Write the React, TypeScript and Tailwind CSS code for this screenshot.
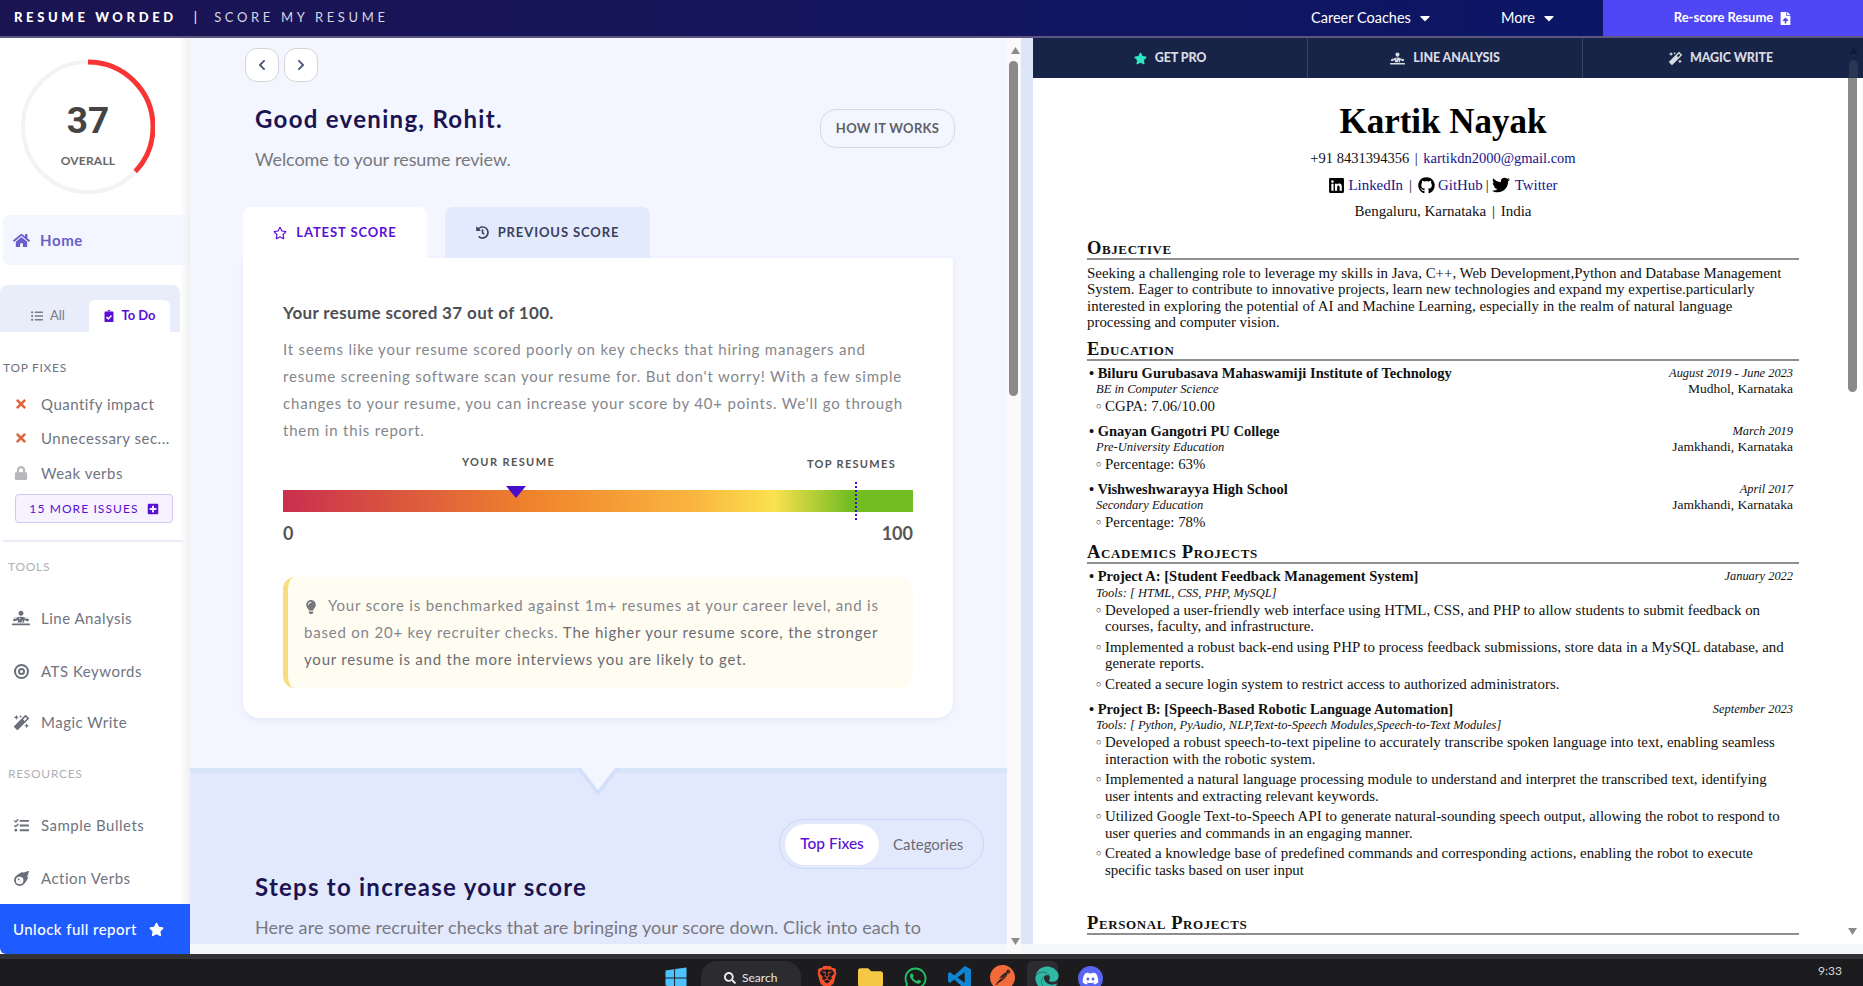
import React from 'react';
import {
  FaHome, FaStar, FaRegStar, FaHistory, FaTimes, FaLock, FaPlusSquare, FaListUl, FaClipboardCheck,
  FaCaretDown, FaFileUpload, FaChevronLeft, FaChevronRight, FaLightbulb, FaLinkedin, FaGithub, FaTwitter,
  FaMagic, FaTasks, FaMeteor, FaDiagnoses, FaWindows, FaFolder, FaWhatsapp, FaEdge, FaDiscord, FaSearch,
} from 'react-icons/fa';
import { SiBrave, SiPostman } from 'react-icons/si';

const Ring = () => (
  <div className="relative ml-[20px] mt-[21px] h-[135px] w-[135px] shrink-0">
    <svg width="135" height="135" viewBox="0 0 135 135">
      <circle cx="68" cy="68" r="65" fill="none" stroke="#f3f3f4" strokeWidth="4" />
      <circle cx="68" cy="68" r="65" fill="none" stroke="#f93434" strokeWidth="5" strokeDasharray="151 408" transform="rotate(-90 68 68)" />
    </svg>
    <div className="absolute left-0 top-[42px] w-[136px] text-center font-['Roboto'] text-[37px] font-bold leading-[40px] text-[#444]">37</div>
    <div className="absolute left-0 top-[94px] w-[136px] text-center text-[12px] font-bold leading-[16px] tracking-[0.2px] text-[#666]">OVERALL</div>
  </div>
);

const SideRow = ({ icon, label, top }: { icon: React.ReactNode; label: string; top: string }) => (
  <div className={`flex h-[20px] items-center text-[15px] leading-[20px] tracking-[0.5px] text-[#6f7480] ${top}`}>
    <span className="flex w-[41px] justify-center pl-[1px] text-[#6b6f7a]">{icon}</span>
    <span className="whitespace-nowrap">{label}</span>
  </div>
);

const Sidebar = () => (
  <aside className="relative flex h-full w-[190px] shrink-0 flex-col bg-white">
    <div className="absolute right-0 top-0 h-full w-[10px] bg-gradient-to-r from-white to-[#efefef]" />
    <Ring />
    <div className="relative ml-[3px] mt-[21px] flex h-[50px] w-[182px] items-center rounded-l-md bg-[#f3f6ff] text-[#6a5fc9]">
      <span className="flex w-[37px] justify-center"><FaHome size={17} /></span>
      <span className="text-[15px] font-bold tracking-[0.6px]">Home</span>
    </div>
    <div className="relative mt-[20px] flex h-[47px] w-[180px] items-end rounded-t-lg bg-[#e9edfa] pl-[31px]">
      <div className="flex h-[32px] w-[58px] items-center gap-[7px] text-[13px] text-[#777c88]">
        <FaListUl size={12} />
        All
      </div>
      <div className="flex h-[32px] w-[81px] items-center justify-center gap-[6px] rounded-t-md bg-white text-[13px] font-bold text-[#5a0fd6]">
        <FaClipboardCheck size={12} />
        To Do
      </div>
    </div>
    <div className="relative mt-[28px] pl-[3px] text-[12px] leading-[16px] tracking-[0.7px] text-[#6f7480]">TOP FIXES</div>
    <SideRow top="relative mt-[18px]" label="Quantify impact" icon={<FaTimes size={14} className="text-[#e0643a]" />} />
    <SideRow top="relative mt-[14px]" label="Unnecessary sec..." icon={<FaTimes size={14} className="text-[#e0643a]" />} />
    <SideRow top="relative mt-[15px]" label="Weak verbs" icon={<FaLock size={14} className="text-[#b8b8bc]" />} />
    <div className="relative ml-[15px] mt-[11px] flex h-[29px] w-[158px] items-center justify-center gap-[8px] rounded-[4px] border border-[#d3c4f5] bg-[#f6f3ff] text-[12px] tracking-[1.1px] text-[#5a0fd6]">
      15 MORE ISSUES
      <FaPlusSquare size={12} />
    </div>
    <div className="relative ml-[3px] mt-[17px] h-[2px] w-[180px] bg-[#e9edfa]" />
    <div className="relative mt-[17px] pl-[8px] text-[12px] leading-[16px] tracking-[0.7px] text-[#aeb0b6]">TOOLS</div>
    <SideRow top="relative mt-[33px]" label="Line Analysis" icon={<FaDiagnoses size={18} />} />
    <SideRow top="relative mt-[33px]" label="ATS Keywords" icon={<span className="block h-[15px] w-[15px] rounded-full border-2 border-[#6b6f7a] p-[2px]"><span className="block h-full w-full rounded-full border-2 border-[#6b6f7a]" /></span>} />
    <SideRow top="relative mt-[31px]" label="Magic Write" icon={<FaMagic size={15} />} />
    <div className="relative mt-[34px] pl-[8px] text-[12px] leading-[16px] tracking-[0.7px] text-[#aeb0b6]">RESOURCES</div>
    <SideRow top="relative mt-[33px]" label="Sample Bullets" icon={<FaTasks size={15} />} />
    <SideRow top="relative mt-[33px]" label="Action Verbs" icon={<FaMeteor size={15} />} />
    <div className="relative mt-auto flex h-[50px] items-center gap-[12px] rounded-bl-md bg-[#1e5cff] pl-[13px] text-[15px] font-medium tracking-[0.45px] text-white">
      Unlock full report
      <FaStar size={15} />
    </div>
  </aside>
);

const Gauge = () => (
  <div className="relative mt-[1px] h-[100px] text-[#555]">
    <div className="absolute left-[179px] top-[9px] text-[11px] font-bold leading-[16px] tracking-[1.4px]">YOUR RESUME</div>
    <div className="absolute right-[17px] top-[11px] text-[11px] font-bold leading-[16px] tracking-[1.3px]">TOP RESUMES</div>
    <div className="absolute left-0 right-0 top-[45px] h-[22px] bg-[linear-gradient(90deg,#c92f4e_0%,#f0842c_40%,#f9b53f_65%,#fbe14f_78%,#72bd22_90%,#72bd22_100%)]" />
    <svg className="absolute left-[222px] top-[40px]" width="22" height="13" viewBox="0 0 22 13">
      <polygon points="1,1 21,1 11,13" fill="#4a0dc9" />
    </svg>
    <div className="absolute left-[572px] top-[37px] h-[38px] border-l-2 border-dotted border-[#4a0dc9]" />
    <div className="absolute left-0 right-0 top-[76px] flex justify-between text-[18px] font-bold leading-[24px]">
      <span>0</span>
      <span>100</span>
    </div>
  </div>
);

const ScoreCard = () => (
  <div className="rounded-b-2xl bg-white px-10 pb-[30px] pt-[43px] shadow-[0_2px_6px_rgba(60,80,140,0.08)]">
    <h3 className="text-[17px] font-bold leading-[24px] tracking-[0.35px] text-[#4d4f55]">Your resume scored 37 out of 100.</h3>
    <p className="mt-[11px] whitespace-nowrap text-[15px] leading-[27px] tracking-[0.8px] text-[#85868c]">
      It seems like your resume scored poorly on key checks that hiring managers and<br />
      resume screening software scan your resume for. But don't worry! With a few simple<br />
      changes to your resume, you can increase your score by 40+ points. We'll go through<br />
      them in this report.
    </p>
    <Gauge />
    <div className="mt-[32px] h-[111px] whitespace-nowrap rounded-xl border-l-[5px] border-[#f8dc82] bg-[#fffcf2] pb-[14px] pl-[16px] pt-[15px] text-[15px] leading-[27px] tracking-[0.8px] text-[#85868c]">
      <FaLightbulb size={14} className="mr-[10px] inline text-[#77787c]" />
      Your score is benchmarked against 1m+ resumes at your career level, and is<br />
      based on 20+ key recruiter checks. <span className="text-[#6b6c72]">The higher your resume score, the stronger<br />
      your resume is and the more interviews you are likely to get.</span>
    </div>
  </div>
);

const MainColumn = () => (
  <main className="h-[906px] w-[817px] shrink-0 overflow-hidden bg-[#f3f6ff]">
    <div className="pl-[53px] pr-[54px] pt-[10px]">
      <div className="ml-[2px] flex gap-[5px] text-[#4f5a7a]">
        <button className="flex h-[34px] w-[34px] items-center justify-center rounded-xl border border-[#d5d6da] bg-white"><FaChevronLeft size={12} /></button>
        <button className="flex h-[34px] w-[34px] items-center justify-center rounded-xl border border-[#d5d6da] bg-white"><FaChevronRight size={12} /></button>
      </div>
      <div className="mt-[22px] flex items-start justify-between pl-[12px]">
        <div>
          <h1 className="text-[24px] font-bold leading-[30px] tracking-[1.3px] text-[#1b1452]">Good evening, Rohit.</h1>
          <p className="mt-[12px] text-[18px] leading-[26px] tracking-[-0.1px] text-[#77787e]">Welcome to your resume review.</p>
        </div>
        <button className="-mr-[2px] mt-[5px] h-[39px] w-[135px] rounded-2xl border border-[#d6d8e6] bg-[#f3f6ff] pt-[1px] text-[13px] font-bold tracking-[0.3px] text-[#5c5e68]">HOW IT WORKS</button>
      </div>
      <div className="mt-[35px] flex h-[51px] gap-[18px]">
        <div className="flex w-[184px] items-center justify-center gap-[9px] rounded-t-lg bg-white text-[13px] font-bold tracking-[0.9px] text-[#5a0fd6]">
          <FaRegStar size={14} />
          LATEST SCORE
        </div>
        <div className="flex w-[205px] items-center justify-center gap-[9px] rounded-t-lg bg-[#e4eafd] text-[13px] font-bold tracking-[0.9px] text-[#3a3f5c]">
          <FaHistory size={13} />
          PREVIOUS SCORE
        </div>
      </div>
      <ScoreCard />
    </div>
    <section className="relative mt-[50px] h-[200px] border-t-[5px] border-[#d8e4fa] bg-[#e3e9fd] pt-[46px]">
      <svg className="absolute left-[386px] top-[-5px]" width="44" height="28" viewBox="0 0 44 28">
        <polygon points="0,0 44,0 22,28" fill="#d3e0fa" />
        <polygon points="5,0 39,0 22,22" fill="#f3f6ff" />
      </svg>
      <div className="flex justify-end pr-[23px]">
        <div className="flex h-[50px] w-[205px] items-center rounded-full border border-[#c9d6fa] pl-[5px]">
          <span className="flex h-[41px] w-[94px] items-center justify-center rounded-full bg-white text-[15.5px] font-medium text-[#5a0fd6]">Top Fixes</span>
          <span className="ml-[14px] text-[15px] text-[#6b6c72]">Categories</span>
        </div>
      </div>
      <h2 className="mt-[3px] pl-[65px] text-[24px] font-bold leading-[30px] tracking-[1.25px] text-[#1b1452]">Steps to increase your score</h2>
      <p className="mt-[12px] whitespace-nowrap pl-[65px] text-[18px] leading-[26px] tracking-[0.07px] text-[#77787e]">Here are some recruiter checks that are bringing your score down. Click into each to</p>
    </section>
  </main>
);

const Scrollbar = ({ className, thumbTop, thumbHeight }: { className: string; thumbTop: string; thumbHeight: string }) => (
  <div className={`relative h-full ${className}`}>
    <svg className="absolute left-[4px] top-[9px]" width="9" height="7" viewBox="0 0 9 7"><polygon points="4.5,0 9,7 0,7" fill="#8a8a8a" /></svg>
    <div className={`absolute left-[2px] w-[9px] rounded-full bg-[#8a8a8a] ${thumbTop} ${thumbHeight}`} />
    <svg className="absolute bottom-[9px] left-[4px]" width="9" height="7" viewBox="0 0 9 7"><polygon points="0,0 9,0 4.5,7" fill="#8a8a8a" /></svg>
  </div>
);

const Heading = ({ children, mt }: { children: string; mt: string }) => (
  <h2 className={`border-b-2 border-[#8f8f8f] text-[18.5px] font-bold leading-[20px] [font-variant:small-caps] tracking-[0.6px] text-[#111] ${mt}`}>{children}</h2>
);

const Entry = ({ title, date, sub, place, mt, children }: { title: string; date: string; sub: string; place?: string; mt: string; children: React.ReactNode }) => (
  <div className={`pl-[2px] pr-[6px] ${mt}`}>
    <div className="flex justify-between text-[14.5px] leading-[16.5px]">
      <span className="font-bold">• {title}</span>
      <span className="text-[12.4px] italic">{date}</span>
    </div>
    <div className="flex justify-between pl-[7px] text-[12.5px] leading-[16.5px]">
      <span className="italic">{sub}</span>
      {place && <span className="text-[13.5px]">{place}</span>}
    </div>
    {children}
  </div>
);

const Bullet = ({ lines, mt }: { lines: string[]; mt: string }) => (
  <div className={`whitespace-nowrap pl-[7px] text-[14.9px] leading-[16.5px] ${mt}`}>
    {lines.map((line, i) => (
      <div key={line} className="flex">
        <span className="w-[9px] shrink-0 text-[9px]">{i === 0 ? '○' : ''}</span>
        {line}
      </div>
    ))}
  </div>
);

const ResumeTab = ({ icon, label, w }: { icon: React.ReactNode; label: string; w: string }) => (
  <div className={`flex h-full items-center justify-center gap-[8px] border-r border-[#3a4566] text-[12.5px] font-black tracking-[-0.1px] text-[#d9dbe2] ${w}`}>
    {icon}
    {label}
  </div>
);

const ResumePanel = () => (
  <div className="relative flex h-[906px] min-w-0 flex-1 flex-col overflow-hidden bg-white font-['Liberation_Serif',serif] text-[#111]">
    <div className="relative flex h-[40px] shrink-0 bg-[#172347] font-['Lato',sans-serif]">
      <ResumeTab w="w-[275px]" label="GET PRO" icon={<FaStar size={13} className="text-[#2ee6c0]" />} />
      <ResumeTab w="w-[275px]" label="LINE ANALYSIS" icon={<FaDiagnoses size={15} />} />
      <ResumeTab w="w-[266px] border-r-0 pl-[10px]" label="MAGIC WRITE" icon={<FaMagic size={13} />} />
      <svg className="absolute right-[5px] top-[9px]" width="9" height="7" viewBox="0 0 9 7"><polygon points="4.5,0 9,7 0,7" fill="#0f1a38" /></svg>
      <div className="absolute right-[5px] top-[22px] h-[18px] w-[9px] rounded-t-full bg-[#2b3552]" />
    </div>
    <div className="absolute bottom-0 right-0 top-[40px] w-[15px]">
      <div className="absolute left-0 top-0 h-[314px] w-[9px] rounded-b-full bg-[#8a8a8a]" />
      <svg className="absolute bottom-[9px] left-0" width="9" height="7" viewBox="0 0 9 7"><polygon points="0,0 9,0 4.5,7" fill="#8a8a8a" /></svg>
    </div>
    <div className="relative pl-[54px] pr-[64px]">
      <div className="pt-[23px] text-center">
        <h1 className="text-[35px] font-bold leading-[42px] text-black">Kartik Nayak</h1>
        <div className="mt-[5px] text-[14.5px] leading-[20px]">+91 8431394356 <span className="mx-[2px]">|</span> <span className="text-[#14148c]">kartikdn2000@gmail.com</span></div>
        <div className="mt-[7px] flex items-center justify-center gap-[3px] text-[14.9px] leading-[20px]">
          <FaLinkedin size={17} className="text-black" /><span className="text-[#14148c]">LinkedIn</span>
          <span className="mx-[3px]">|</span>
          <FaGithub size={17} className="text-black" /><span className="text-[#14148c]">GitHub</span>
          <span>|</span>
          <FaTwitter size={18} className="text-black" /><span className="ml-[2px] text-[#14148c]">Twitter</span>
        </div>
        <div className="mt-[6px] text-[15px] leading-[20px]">Bengaluru, Karnataka <span className="mx-[2px]">|</span> India</div>
      </div>
      <Heading mt="mt-[17px]">Objective</Heading>
      <p className="mt-[5px] whitespace-nowrap text-[14.9px] leading-[16.4px]">
        Seeking a challenging role to leverage my skills in Java, C++, Web Development,Python and Database Management<br />
        System. Eager to contribute to innovative projects, learn new technologies and expand my expertise.particularly<br />
        interested in exploring the potential of AI and Machine Learning, especially in the realm of natural language<br />
        processing and computer vision.
      </p>
      <Heading mt="mt-[8px]">Education</Heading>
      <Entry mt="mt-[4px]" title="Biluru Gurubasava Mahaswamiji Institute of Technology" date="August 2019 - June 2023" sub="BE in Computer Science" place="Mudhol, Karnataka">
        <Bullet mt="mt-0" lines={['CGPA: 7.06/10.00']} />
      </Entry>
      <Entry mt="mt-[8.5px]" title="Gnayan Gangotri PU College" date="March 2019" sub="Pre-University Education" place="Jamkhandi, Karnataka">
        <Bullet mt="mt-0" lines={['Percentage: 63%']} />
      </Entry>
      <Entry mt="mt-[8.5px]" title="Vishweshwarayya High School" date="April 2017" sub="Secondary Education" place="Jamkhandi, Karnataka">
        <Bullet mt="mt-0" lines={['Percentage: 78%']} />
      </Entry>
      <Heading mt="mt-[12px]">Academics Projects</Heading>
      <Entry mt="mt-[4px]" title="Project A: [Student Feedback Management System]" date="January 2022" sub="Tools: [ HTML, CSS, PHP, MySQL]">
        <Bullet mt="mt-[0.5px]" lines={['Developed a user-friendly web interface using HTML, CSS, and PHP to allow students to submit feedback on', 'courses, faculty, and infrastructure.']} />
        <Bullet mt="mt-[4px]" lines={['Implemented a robust back-end using PHP to process feedback submissions, store data in a MySQL database, and', 'generate reports.']} />
        <Bullet mt="mt-[4px]" lines={['Created a secure login system to restrict access to authorized administrators.']} />
      </Entry>
      <Entry mt="mt-[8.5px]" title="Project B: [Speech-Based Robotic Language Automation]" date="September 2023" sub="Tools: [ Python, PyAudio, NLP,Text-to-Speech Modules,Speech-to-Text Modules]">
        <Bullet mt="mt-[0.5px]" lines={['Developed a robust speech-to-text pipeline to accurately transcribe spoken language into text, enabling seamless', 'interaction with the robotic system.']} />
        <Bullet mt="mt-[4px]" lines={['Implemented a natural language processing module to understand and interpret the transcribed text, identifying', 'user intents and extracting relevant keywords.']} />
        <Bullet mt="mt-[4px]" lines={['Utilized Google Text-to-Speech API to generate natural-sounding speech output, allowing the robot to respond to', 'user queries and commands in an engaging manner.']} />
        <Bullet mt="mt-[4px]" lines={['Created a knowledge base of predefined commands and corresponding actions, enabling the robot to execute', 'specific tasks based on user input']} />
      </Entry>
      <Heading mt="mt-[35px]">Personal Projects</Heading>
    </div>
  </div>
);

const Taskbar = () => (
  <div className="h-[32px] shrink-0 overflow-hidden border-t-[5px] border-[#333335] bg-[#1c1c1f]">
    <div className="flex h-full items-start">
      <div className="ml-[664px] mt-[7px] text-[#4cc2ff]"><FaWindows size={24} /></div>
      <div className="ml-[13px] mt-[2px] flex h-[40px] w-[100px] items-start gap-[6px] rounded-t-2xl bg-[#2c2c30] pl-[23px] pt-[8px] text-[12px] text-[#e8e8e8]">
        <FaSearch size={12} className="mt-[3px]" />
        Search
      </div>
      <div className="ml-[15px] mt-[7px] text-[#f5502a]"><SiBrave size={22} /></div>
      <div className="ml-[20px] mt-[6px] text-[#f6c744]"><FaFolder size={25} /></div>
      <div className="ml-[20px] mt-[7px] text-[#25c264]"><FaWhatsapp size={25} /></div>
      <svg className="ml-[19px] mt-[6px]" width="25" height="25" viewBox="0 0 24 24"><path d="M17 1 L23 4 V20 L17 23 L7 14 L3 17 L1 16 V8 L3 7 L7 10 Z M17 7 L10 12 L17 17 Z" fill="#0f86d4" fillRule="evenodd" /></svg>
      <div className="ml-[18px] mt-[6px] text-[#f26b3a]"><SiPostman size={25} /></div>
      <div className="ml-[12px] mt-[2px] h-[40px] w-[31px] rounded-t-md bg-[#2c2c30] pl-[8px] pt-[5px] text-[#2fb8a6]"><FaEdge size={24} /></div>
      <div className="ml-[20px] mt-[7px] flex h-[25px] w-[25px] items-center justify-center rounded-full bg-[#5865f2] text-white"><FaDiscord size={17} /></div>
      <div className="ml-auto mr-[21px] mt-[3px] text-[12px] text-[#d8d8d8]">9:33</div>
    </div>
  </div>
);

export default function App() {
  return (
    <div className="flex h-[986px] w-[1863px] flex-col overflow-hidden bg-[#f5f6fa] font-['Lato',sans-serif]">
      <header className="flex h-[38px] shrink-0 items-center border-b-2 border-[#5a5680] bg-gradient-to-r from-[#1b1452] to-[#07166a]">
        <span className="pl-[14px] text-[13px] font-black tracking-[3.65px] text-white">RESUME WORDED</span>
        <span className="ml-[17px] text-[13px] text-white">|</span>
        <span className="ml-[17px] text-[13px] tracking-[3.65px] text-[#d5d5e6]">SCORE MY RESUME</span>
        <div className="ml-auto flex h-full items-center text-[14.5px] text-white">
          <span className="flex items-center gap-[6px]">Career Coaches <FaCaretDown size={16} /></span>
          <span className="ml-[68px] flex items-center gap-[6px]">More <FaCaretDown size={16} /></span>
          <div className="ml-[46px] flex h-full w-[260px] items-center justify-center gap-[6px] bg-[#4f46f5] text-[13px] font-bold">
            Re-score Resume <FaFileUpload size={13} />
          </div>
        </div>
      </header>
      <div className="flex h-[916px] shrink-0 items-start">
        <Sidebar />
        <MainColumn />
        <Scrollbar className="h-[906px] w-[14px] bg-[#fafafa]" thumbTop="top-[23px]" thumbHeight="h-[335px]" />
        <div className="h-[906px] w-[12px] shrink-0 bg-[#dce6f8]" />
        <ResumePanel />
      </div>
      <Taskbar />
    </div>
  );
}
